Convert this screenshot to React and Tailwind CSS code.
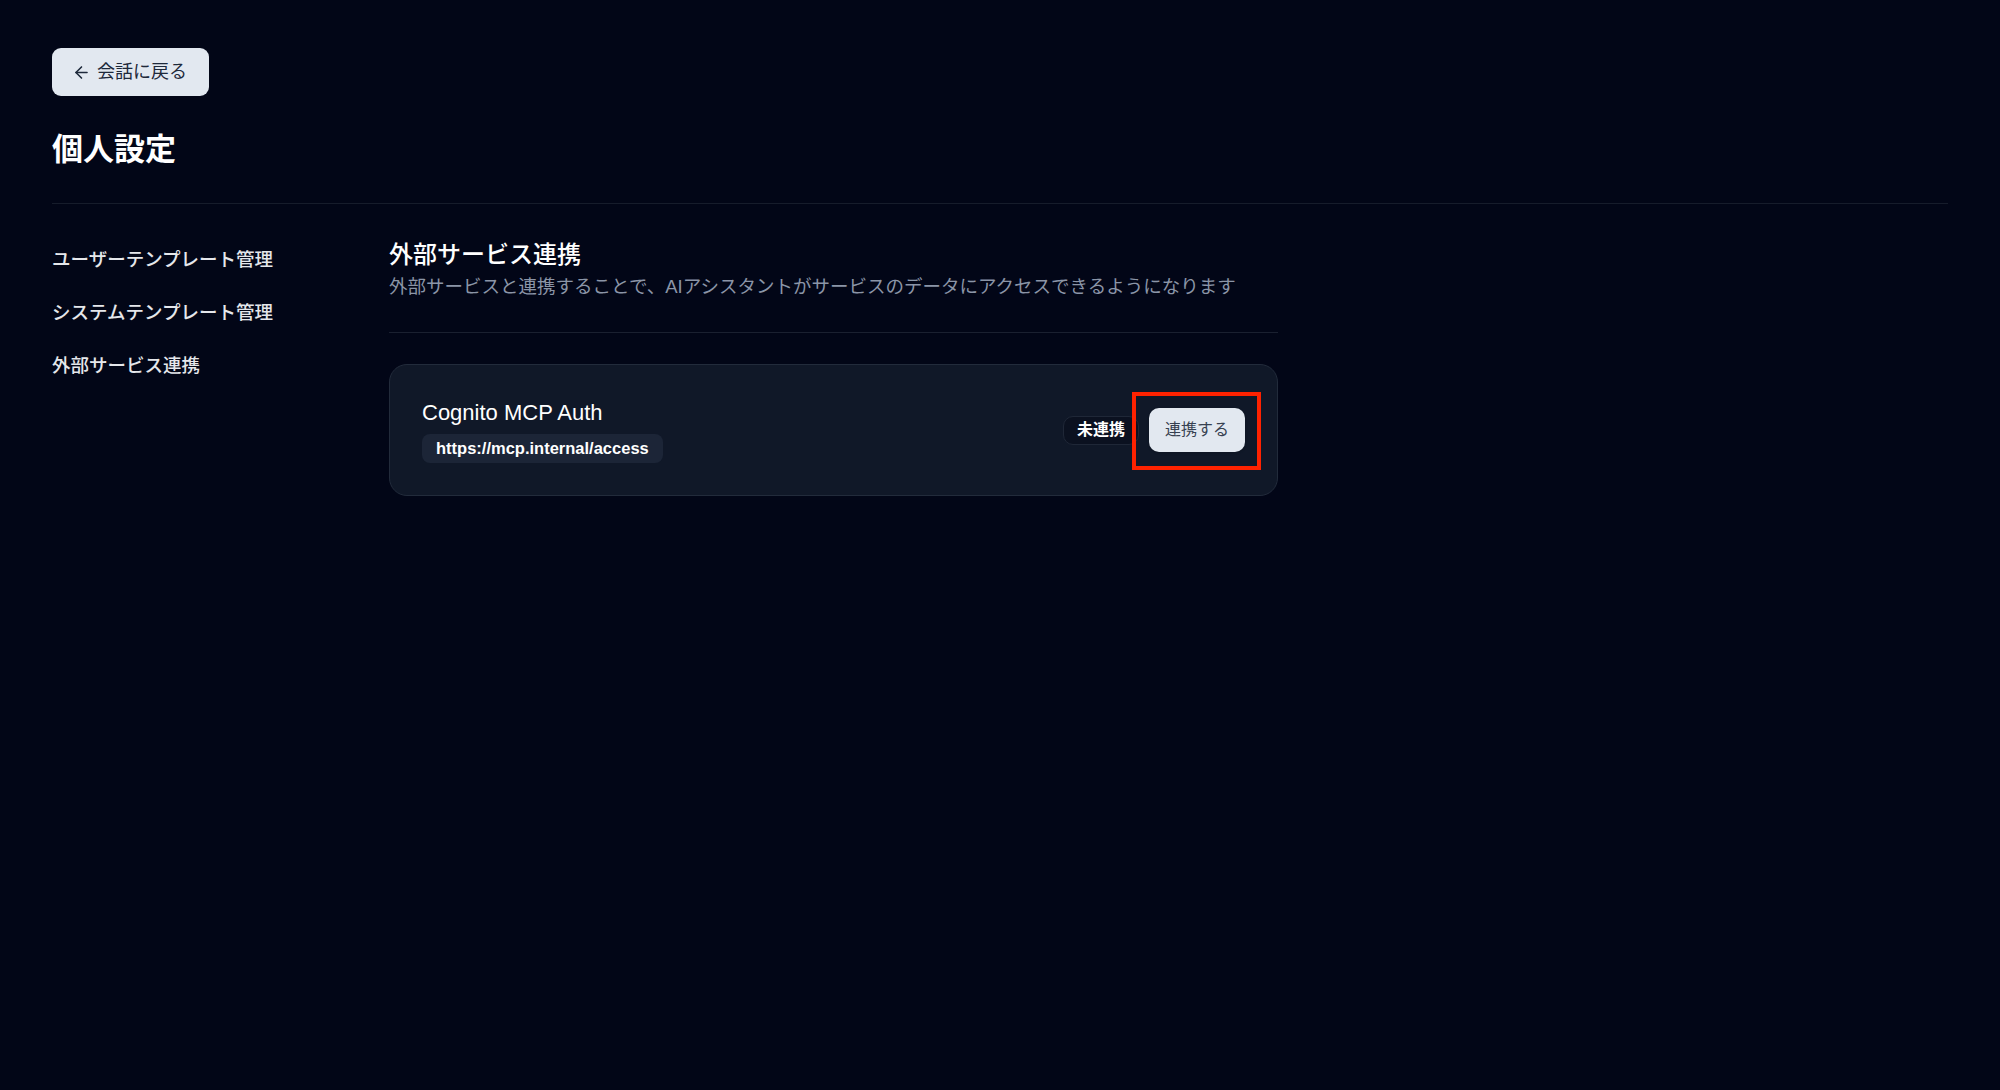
import React from "react";
import { ArrowLeft } from "lucide-react";

const FONT = {
  fontFamily:
    '"Liberation Sans", "Noto Sans CJK JP", "Noto Sans", sans-serif',
};

const menuItems = [
  "ユーザーテンプレート管理",
  "システムテンプレート管理",
  "外部サービス連携",
];

export default function App() {
  return (
    <div
      className="min-h-screen w-full bg-[#020617] px-[52px] pt-[48px] text-white"
      style={FONT}
    >
      <button className="flex h-[48px] items-center gap-[6px] rounded-[9px] bg-[#e2e8f0] pl-[20px] pr-[22px] text-[18px] text-[#1e293b]">
        <ArrowLeft size={19} strokeWidth={2} />
        <span>会話に戻る</span>
      </button>

      <h1 className="mt-[34px] text-[31px] font-bold leading-[40px]">個人設定</h1>

      <div className="mt-[33px] h-px w-full bg-[#161c2b]" />

      <div className="flex">
        <nav className="flex w-[337px] shrink-0 flex-col gap-[25px] pt-[42px]">
          {menuItems.map((item) => (
            <a
              key={item}
              className="text-[18.5px] font-medium leading-[28px] text-[#e5e7eb]"
            >
              {item}
            </a>
          ))}
        </nav>

        <main className="w-[889px] pt-[35px]">
          <h2 className="text-[24px] font-medium leading-[32px]">外部サービス連携</h2>
          <p className="mt-[2px] text-[18.5px] leading-[28px] text-[#8b95a7]">
            外部サービスと連携することで、AIアシスタントがサービスのデータにアクセスできるようになります
          </p>

          <div className="mt-[31px] h-px w-full bg-[#1a2030]" />

          <ServiceCard
            name="Cognito MCP Auth"
            url="https://mcp.internal/access"
          />
        </main>
      </div>
    </div>
  );
}

const ServiceCard = ({ name, url }) => {
  return (
    <div className="mt-[31px] flex h-[132px] items-center justify-between rounded-[18px] border border-[#222b3b] bg-[#101828] px-[32px]">
      <div className="flex flex-col items-start">
        <div className="text-[22px] font-medium leading-[30px] text-white">
          {name}
        </div>
        <div className="mt-[6px] flex h-[29px] items-center rounded-[8px] bg-[#1c2537] px-[14px] text-[16.5px] font-bold text-white">
          {url}
        </div>
      </div>

      <div className="flex items-center gap-[10px]">
        <span className="flex h-[29px] items-center rounded-[10px] border border-[#1f2737] bg-[#0b1120] px-[13px] text-[16px] font-bold text-white">
          未連携
        </span>
        <div className="relative">
          <button className="h-[44px] rounded-[10px] bg-[#e2e8f0] px-[16px] text-[16px] text-[#374151] shadow-sm">
            連携する
          </button>
          <div className="pointer-events-none absolute -bottom-[18px] -left-[17px] -right-[16px] -top-[16px] border-[4px] border-[#ff2200]" />
        </div>
      </div>
    </div>
  );
};
